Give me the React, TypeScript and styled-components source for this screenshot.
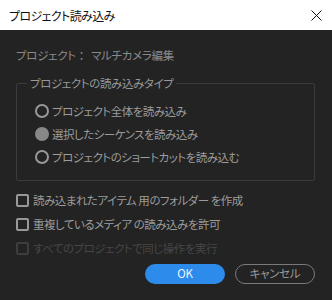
import styled, { createGlobalStyle } from 'styled-components'

const GlobalStyle = createGlobalStyle`
  html, body {
    margin: 0;
    padding: 0;
    background: #232323;
  }
  body {
    font-family: "Noto Sans CJK JP", "Noto Sans", sans-serif;
    font-feature-settings: "palt";
  }
`

const Dialog = styled.div`
  width: 332px;
  height: 300px;
  background: #232323;
  display: flex;
  flex-direction: column;
  overflow: hidden;
`

const TitleBar = styled.div`
  height: 30px;
  background: #ffffff;
  display: flex;
  align-items: center;
  justify-content: space-between;
  padding: 0 10px 0 9px;
  box-sizing: border-box;
  flex-shrink: 0;
`

const Title = styled.div`
  font-size: 12px;
  letter-spacing: -0.6px;
  line-height: 16px;
  color: #111111;
  padding-top: 1px;
`

const CloseButton = styled.div`
  width: 12px;
  height: 12px;
  display: flex;
  align-items: center;
  justify-content: center;
`

const Body = styled.div`
  padding: 17px 17px 0 16px;
  display: flex;
  flex-direction: column;
`

const ProjectLine = styled.div`
  font-size: 11.5px;
  letter-spacing: -0.3px;
  line-height: 16px;
  color: #8a8a8a;
  height: 16px;
`

const Colon = styled.span`
  font-feature-settings: normal;
  margin-right: 4px;
`

const Group = styled.fieldset`
  margin: 12px 0 0 0;
  padding: 8px 0 12px 18px;
  border: 1px solid #3b3b3b;
  border-radius: 2px;
  width: 299px;
  box-sizing: border-box;
  display: flex;
  flex-direction: column;
`

const Legend = styled.legend`
  font-size: 11.5px;
  letter-spacing: -0.4px;
  line-height: 16px;
  color: #989898;
  padding: 0 3px;
  margin-left: -8px;
`

const OptionRow = styled.div<{ $disabled?: boolean }>`
  height: 23px;
  display: flex;
  align-items: center;
  gap: 3px;
  font-size: 11.5px;
  letter-spacing: -0.5px;
  color: ${(p) => (p.$disabled ? '#464646' : '#9c9c9c')};
`

const RadioMark = styled.span<{ $checked?: boolean }>`
  width: 14px;
  height: 14px;
  border-radius: 50%;
  box-sizing: border-box;
  border: ${(p) => (p.$checked ? 'none' : '2px solid #989898')};
  background: ${(p) => (p.$checked ? '#888888' : 'transparent')};
  flex-shrink: 0;
`

const Checks = styled.div`
  margin-top: 7px;
  display: flex;
  flex-direction: column;
`

const CheckRow = styled(OptionRow)`
  height: 24px;
  gap: 4px;
`

const CheckMark = styled.span<{ $disabled?: boolean }>`
  width: 13px;
  height: 13px;
  box-sizing: border-box;
  border: 2px solid ${(p) => (p.$disabled ? '#3d3d3d' : '#989898')};
  border-radius: 2px;
  flex-shrink: 0;
`

const Buttons = styled.div`
  margin-top: 4px;
  display: flex;
  justify-content: flex-end;
  gap: 10px;
`

const Button = styled.button<{ $primary?: boolean }>`
  width: 80px;
  height: 20px;
  border-radius: 10px;
  box-sizing: border-box;
  font-family: "Noto Sans CJK JP", "Noto Sans", sans-serif;
  font-feature-settings: "palt";
  font-size: 11.5px;
  letter-spacing: -0.3px;
  line-height: 1;
  padding: 0;
  cursor: pointer;
  border: ${(p) => (p.$primary ? 'none' : '1px solid #7a7a7a')};
  background: ${(p) => (p.$primary ? '#2d8ceb' : 'transparent')};
  color: ${(p) => (p.$primary ? '#eef4ff' : '#9a9a9a')};
`

const radios = [
  { label: 'プロジェクト全体を読み込み', checked: false },
  { label: '選択したシーケンスを読み込み', checked: true },
  { label: 'プロジェクトのショートカットを読み込む', checked: false },
]

const checks = [
  { label: '読み込まれたアイテム 用のフォルダー を作成', disabled: false },
  { label: '重複しているメディア の読み込みを許可', disabled: false },
  { label: 'すべてのプロジェクトで同じ操作を実行', disabled: true },
]

const App = () => {
  return (
    <>
      <GlobalStyle />
      <Dialog>
        <TitleBar>
          <Title>プロジェクト読み込み</Title>
          <CloseButton>
            <svg width="11" height="11" viewBox="0 0 11 11">
              <path d="M0.5 0.5 L10.5 10.5 M10.5 0.5 L0.5 10.5" stroke="#111" strokeWidth="1" />
            </svg>
          </CloseButton>
        </TitleBar>
        <Body>
          <ProjectLine>
            プロジェクト<Colon>：</Colon>マルチカメラ編集
          </ProjectLine>
          <Group>
            <Legend>プロジェクトの読み込みタイプ</Legend>
            {radios.map((r, i) => (
              <OptionRow key={i}>
                <RadioMark $checked={r.checked} />
                {r.label}
              </OptionRow>
            ))}
          </Group>
          <Checks>
            {checks.map((c, i) => (
              <CheckRow key={i} $disabled={c.disabled}>
                <CheckMark $disabled={c.disabled} />
                {c.label}
              </CheckRow>
            ))}
          </Checks>
          <Buttons>
            <Button $primary>OK</Button>
            <Button>キャンセル</Button>
          </Buttons>
        </Body>
      </Dialog>
    </>
  )
}

export default App
